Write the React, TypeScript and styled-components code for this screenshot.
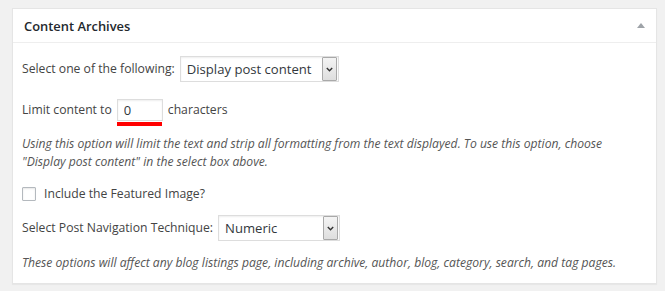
import styled, { createGlobalStyle } from "styled-components";

const GlobalStyle = createGlobalStyle`
  html, body {
    margin: 0;
    padding: 0;
    background: #f1f1f1;
  }
  body {
    font-family: "Open Sans", "Noto Sans", sans-serif;
    font-size: 12.2px;
    color: #444;
  }
`;

const Page = styled.div`
  padding: 8px 8px 8px 12px;
`;

const Panel = styled.div`
  background: #fff;
  border: 1px solid #e5e5e5;
  box-shadow: 0 1px 1px rgba(0, 0, 0, 0.04);
`;

const Header = styled.div`
  display: flex;
  align-items: center;
  justify-content: space-between;
  height: 33px;
  padding: 0 11px 0 11px;
  border-bottom: 1px solid #eee;
`;

const Title = styled.h2`
  margin: 0;
  font-size: 12.9px;
  font-weight: 600;
  color: #23282d;
`;

const Toggle = styled.span`
  width: 0;
  height: 0;
  border-left: 4px solid transparent;
  border-right: 4px solid transparent;
  border-bottom: 5px solid #9ea3a8;
`;

const Inside = styled.div`
  padding: 13px 9px 11px;
`;

const Row = styled.div<{ $gap: number }>`
  display: flex;
  align-items: center;
  gap: 5px;
  margin-top: ${(p) => p.$gap}px;
  line-height: 18px;
  &:first-child {
    margin-top: 0;
  }
`;

const Select = styled.div<{ $width: number }>`
  display: flex;
  align-items: center;
  justify-content: space-between;
  box-sizing: border-box;
  width: ${(p) => p.$width}px;
  height: 26px;
  padding: 0 1px 0 6px;
  border: 1px solid #ddd;
  background: #fff;
  font-size: 13.1px;
  color: #32373c;
  box-shadow: inset 0 1px 2px rgba(0, 0, 0, 0.07);
`;

const SelectArrow = styled.span`
  display: flex;
  align-items: center;
  justify-content: center;
  box-sizing: border-box;
  width: 15px;
  height: 24px;
  border: 1px solid #a9a9a9;
  border-radius: 1px;
  background: linear-gradient(#f4f4f4, #dedede);
`;

const NumberWrap = styled.span`
  position: relative;
  display: inline-flex;
  &::after {
    content: "";
    position: absolute;
    left: 0;
    right: 1px;
    bottom: -5px;
    height: 4px;
    background: #f00;
  }
`;

const NumberInput = styled.input`
  box-sizing: border-box;
  width: 46px;
  height: 22px;
  margin: 0;
  padding: 0 6px;
  border: 1px solid #ddd;
  box-shadow: inset 0 1px 2px rgba(0, 0, 0, 0.07);
  font-family: "Open Sans", "Noto Sans", sans-serif;
  font-size: 13px;
  color: #32373c;
  outline: none;
`;

const Note = styled.p<{ $gap: number }>`
  margin: ${(p) => p.$gap}px 0 0;
  font-style: italic;
  font-size: 12.15px;
  line-height: 18px;
  color: #555;
`;

const Check = styled.span`
  box-sizing: border-box;
  width: 14px;
  height: 14px;
  margin-right: 3px;
  border: 1px solid #b4b9be;
  border-radius: 1px;
  background: #fff;
  box-shadow: inset 0 1px 2px rgba(0, 0, 0, 0.1);
`;

function Chevron() {
  return (
    <svg width="7" height="5" viewBox="0 0 7 5">
      <path d="M0.8 1 L3.5 3.8 L6.2 1" fill="none" stroke="#333" strokeWidth="1.4" />
    </svg>
  );
}

function App() {
  return (
    <Page>
      <GlobalStyle />
      <Panel>
        <Header>
          <Title>Content Archives</Title>
          <Toggle />
        </Header>
        <Inside>
          <Row $gap={0}>
            <span>Select one of the following:</span>
            <Select $width={159}>
              <span>Display post content</span>
              <SelectArrow>
                <Chevron />
              </SelectArrow>
            </Select>
          </Row>
          <Row $gap={17}>
            <span>Limit content to</span>
            <NumberWrap>
              <NumberInput type="text" defaultValue="0" />
            </NumberWrap>
            <span>characters</span>
          </Row>
          <Note $gap={14}>
            Using this option will limit the text and strip all formatting from the text displayed. To
            use this option, choose "Display post content" in the select box above.
          </Note>
          <Row $gap={14}>
            <Check />
            <span>Include the Featured Image?</span>
          </Row>
          <Row $gap={12}>
            <span>Select Post Navigation Technique:</span>
            <Select $width={122}>
              <span>Numeric</span>
              <SelectArrow>
                <Chevron />
              </SelectArrow>
            </Select>
          </Row>
          <Note $gap={13}>
            These options will affect any blog listings page, including archive, author, blog,
            category, search, and tag pages.
          </Note>
        </Inside>
      </Panel>
    </Page>
  );
}

export default App;
